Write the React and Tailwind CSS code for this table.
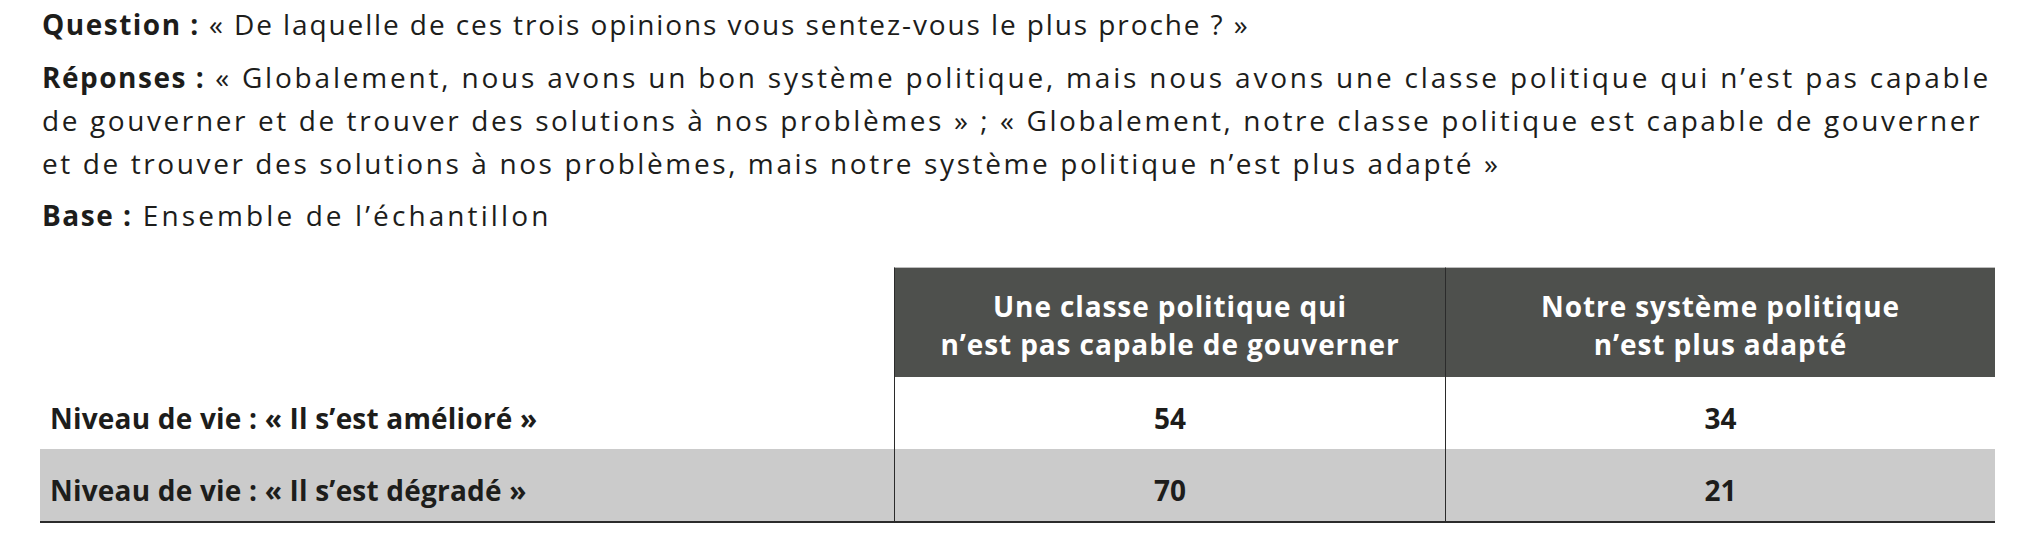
const rows = [
  { label: 'Niveau de vie : « Il s’est amélioré »', a: 54, b: 34, shaded: false },
  { label: 'Niveau de vie : « Il s’est dégradé »', a: 70, b: 21, shaded: true },
];

const App = () => {
  return (
    <div
      className="w-[2038px] h-[556px] bg-white pl-[40px] text-[#1d1d1b] text-[28px]"
      style={{ fontFamily: '"Open Sans", "Liberation Sans", sans-serif' }}
    >
      {/* Question / Réponses / Base */}
      <div className="pl-[2px] pt-[3px] leading-[43px] whitespace-nowrap">
        <p className="tracking-[1.9px]">
          <span className="font-bold tracking-[1.5px]">Question :</span> « De laquelle de ces trois opinions vous sentez-vous le plus proche ? »
        </p>
        <p className="mt-[10px] tracking-[2.6px]">
          <span className="tracking-[2.8px]">
            <span className="font-bold tracking-[1.5px]">Réponses :</span> « Globalement, nous avons un bon système politique, mais nous avons une classe politique qui n’est pas capable
          </span>
          <br />
          de gouverner et de trouver des solutions à nos problèmes » ; « Globalement, notre classe politique est capable de gouverner
          <br />
          et de trouver des solutions à nos problèmes, mais notre système politique n’est plus adapté »
        </p>
        <p className="mt-[9px] tracking-[3.1px]">
          <span className="font-bold tracking-[1.5px]">Base :</span> Ensemble de l’échantillon
        </p>
      </div>

      {/* Table */}
      <div className="mt-[30px] grid grid-cols-[854px_551px_550px] font-bold">
        <div />
        <div className="h-[110px] bg-[#4e504d] border-l border-[#2b2b2b] border-t border-t-[#bdbdbd] flex items-center justify-center text-center text-white leading-[38px] pt-[4px] tracking-[0.9px]">
          Une classe politique qui
          <br />
          n’est pas capable de gouverner
        </div>
        <div className="h-[110px] bg-[#4e504d] border-l border-[#2b2b2b] border-t border-t-[#bdbdbd] flex items-center justify-center text-center text-white leading-[38px] pt-[4px] tracking-[0.9px]">
          Notre système politique
          <br />
          n’est plus adapté
        </div>

        {rows.map((r) => (
          <div key={r.label} className="contents">
            <div className={`h-[72px] flex items-center pl-[10px] pt-[10px] tracking-[0.2px] ${r.shaded ? 'bg-[#cbcbcb]' : ''}`}>
              {r.label}
            </div>
            <div className={`h-[72px] flex items-center justify-center pt-[10px] border-l border-[#2b2b2b] ${r.shaded ? 'bg-[#cbcbcb]' : ''}`}>
              {r.a}
            </div>
            <div className={`h-[72px] flex items-center justify-center pt-[10px] border-l border-[#2b2b2b] ${r.shaded ? 'bg-[#cbcbcb]' : ''}`}>
              {r.b}
            </div>
          </div>
        ))}
        <div className="col-span-3 h-[2px] bg-[#2b2b2b]" />
      </div>
    </div>
  );
};

export default App;
